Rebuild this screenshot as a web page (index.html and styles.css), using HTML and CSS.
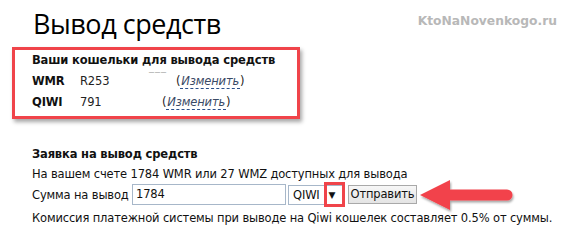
FILE: index.html
```html
<!DOCTYPE html>
<html lang="ru">
<head>
<meta charset="utf-8">
<title>Вывод средств</title>
<link rel="stylesheet" href="styles.css">
</head>
<body>
<div class="page">
  <header class="top">
    <h1 class="title">Вывод средств</h1>
    <div class="watermark">KtoNaNovenkogo.ru</div>
  </header>

  <div class="wallets">
    <div class="wallets-head">Ваши кошельки для вывода средств</div>
    <div class="wallet-row">
      <span class="wallet-label">WMR</span><span class="wallet-val val-wmr">R253<span class="redact">&#8254;&#8254;&#8254;</span></span><span class="paren">(</span><a class="change">Изменить</a><span class="paren">)</span>
    </div>
    <div class="wallet-row">
      <span class="wallet-label">QIWI</span><span class="wallet-val val-qiwi">791</span><span class="paren">(</span><a class="change">Изменить</a><span class="paren">)</span>
    </div>
  </div>

  <section class="request">
    <div class="request-head">Заявка на вывод средств</div>
    <div class="info">На вашем счете 1784 WMR или 27 WMZ доступных для вывода</div>
    <div class="form-row">
      <span class="form-label">Сумма на вывод</span>
      <span class="input">1784</span>
      <span class="select"><span class="select-text">QIWI</span><span class="select-arrow">&#9660;</span><span class="mark"></span></span>
      <span class="btn">Отправить</span>
      <svg class="arrow" width="100" height="36" viewBox="0 0 100 36">
        <defs>
          <filter id="sh" x="-10%" y="-20%" width="130%" height="150%">
            <feDropShadow dx="1" dy="2" stdDeviation="1.2" flood-color="#000" flood-opacity="0.35"/>
          </filter>
        </defs>
        <g filter="url(#sh)" fill="#f2434b">
          <polygon points="2,17 32,2 32,32"/>
          <path d="M31 11.5 H89 a5.5 5.5 0 0 1 0 11 H31 Z"/>
        </g>
      </svg>
    </div>
    <div class="commission">Комиссия платежной системы при выводе на Qiwi кошелек составляет 0.5% от суммы.</div>
  </section>
</div>
</body>
</html>
```

FILE: styles.css
```css
html, body {
  margin: 0;
  padding: 0;
  background: #ffffff;
}

body {
  width: 570px;
  height: 252px;
  overflow: hidden;
  font-family: "DejaVu Sans", Verdana, sans-serif;
  font-size: 11.5px;
  letter-spacing: -0.15px;
  color: #111111;
}

.page {
  padding: 0 0 0 12px;
}

.top {
  display: flex;
  justify-content: space-between;
  align-items: flex-start;
  height: 47px;
}

.title {
  margin: 5px 0 0 21px;
  font-family: "Open Sans", "Noto Sans", sans-serif;
  font-weight: 400;
  font-size: 27px;
  line-height: 38px;
  color: #000000;
  letter-spacing: -0.45px;
}

.watermark {
  margin: 14px 13px 0 0;
  font-family: "DejaVu Sans", sans-serif;
  font-weight: bold;
  font-size: 12.3px;
  line-height: 14px;
  letter-spacing: 0;
  color: #b8b8b8;
}

.wallets {
  box-sizing: content-box;
  width: 265px;
  height: 66px;
  border: 3px solid #f0444a;
  box-shadow: 2px 3px 4px rgba(0, 0, 0, 0.35);
  padding: 0 0 0 17px;
}

.wallets-head {
  font-weight: bold;
  line-height: 21px;
  height: 21px;
}

.wallet-row {
  display: flex;
  align-items: baseline;
  line-height: 21px;
  height: 21px;
}

.wallet-label {
  width: 48px;
  font-weight: bold;
  flex: none;
}

.wallet-val {
  flex: none;
  color: #222222;
}

.val-wmr {
  width: 96px;
  position: relative;
}

.val-qiwi {
  width: 82px;
}

.redact {
  position: absolute;
  left: 69px;
  top: -5px;
  color: #b0b0b0;
  font-size: 10px;
  letter-spacing: 1px;
}

.paren {
  color: #222222;
}

.change {
  font-style: italic;
  color: #3a4a66;
  border-bottom: 1px dashed #2a4f8a;
  line-height: 13px;
  padding: 0 1px;
}

.request {
  margin-top: 25px;
  padding-left: 20px;
}

.request-head {
  font-weight: bold;
  line-height: 20px;
}

.info {
  line-height: 20px;
}

.form-row {
  display: flex;
  align-items: center;
  height: 21px;
  position: relative;
}

.form-label {
  width: 100px;
  flex: none;
}

.input {
  box-sizing: border-box;
  width: 154px;
  height: 21px;
  border: 1px solid #a7b7c9;
  padding: 0 3px;
  line-height: 19px;
  color: #111111;
  flex: none;
}

.select {
  box-sizing: border-box;
  position: relative;
  margin-left: 2px;
  width: 57px;
  height: 20px;
  border: 1px solid #a7b7c9;
  display: flex;
  align-items: center;
  padding-left: 4px;
  flex: none;
}

.select-text {
  line-height: 18px;
}

.select-arrow {
  font-size: 9px;
  margin-left: 9px;
}

.mark {
  position: absolute;
  left: 35px;
  top: -4px;
  width: 15px;
  height: 19px;
  border: 3px solid #f0444a;
}

.btn {
  box-sizing: border-box;
  margin-left: 3px;
  width: 69px;
  height: 19px;
  border: 1px solid #a9a9a9;
  background: linear-gradient(#f7f7f7, #e4e4e4);
  text-align: center;
  line-height: 17px;
  color: #111111;
  flex: none;
}

.arrow {
  position: absolute;
  left: 386px;
  top: -6px;
}

.commission {
  margin-top: 3px;
  line-height: 20px;
}
```
